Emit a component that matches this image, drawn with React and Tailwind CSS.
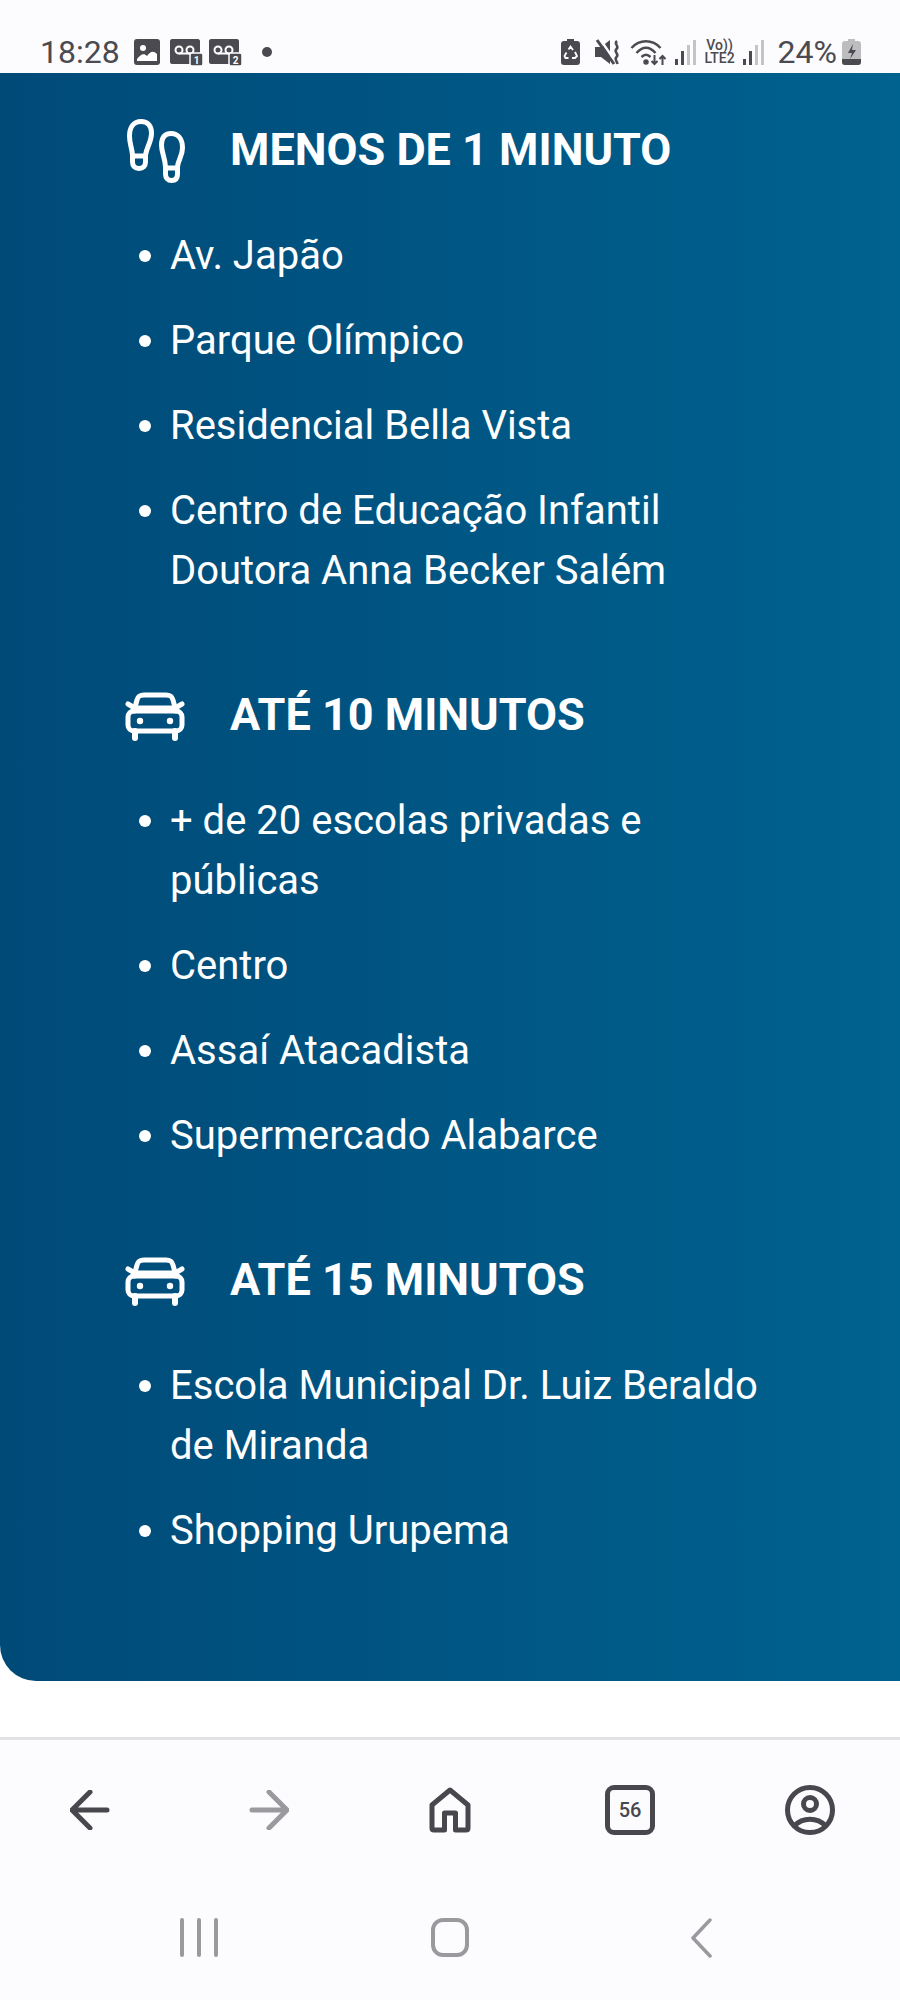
const sections = [
  {
    icon: 'feet',
    title: 'MENOS DE 1 MINUTO',
    items: ['Av. Japão', 'Parque Olímpico', 'Residencial Bella Vista', 'Centro de Educação Infantil Doutora Anna Becker Salém'],
  },
  {
    icon: 'car',
    title: 'ATÉ 10 MINUTOS',
    items: ['+ de 20 escolas privadas e públicas', 'Centro', 'Assaí Atacadista', 'Supermercado Alabarce'],
  },
  {
    icon: 'car',
    title: 'ATÉ 15 MINUTOS',
    items: ['Escola Municipal Dr. Luiz Beraldo de Miranda', 'Shopping Urupema'],
  },
];

function FeetIcon() {
  return (
    <svg width="60" height="66" viewBox="0 0 60 66" fill="none" stroke="white" strokeWidth="5">
      <path d="M15 4.500C22 4.500 25.500 9 25.500 16C25.500 25 21 29 19.500 38V45C19.500 49 17 51.500 13 51.500C9 51.500 6.500 49 6.500 45V38C6 31 3.500 27 3.500 19C3.500 10 8 4.500 15 4.500Z" />
      <path d="M6.500 39H19.500" />
      <path d="M45 16.500C38.500 16.500 35.500 21 35.500 28C35.500 36 39 40 39.500 50V57C39.500 61 42 63.500 45.500 63.500C49.500 63.500 51.500 61 51.500 57V50C52 43 56.500 39 56.500 31C56.500 22 52 16.500 45 16.500Z" />
      <path d="M39.500 51H51.500" />
    </svg>
  );
}

function CarIcon() {
  return (
    <svg className="mt-[4px] -ml-[1px]" width="60" height="52" viewBox="0 0 60 52" fill="none" stroke="white" strokeWidth="5" strokeLinecap="round" strokeLinejoin="round">
      <path d="M3 13L8 16" />
      <path d="M57 13L52 16" />
      <path d="M9 20L12 9C13 5 15 4 19 4H41C45 4 47 5 48 9L51 20" />
      <path d="M9 17H51" />
      <rect x="3" y="20" width="54" height="20" rx="6" />
      <path d="M10 40V47M50 40V47" strokeWidth="6" />
      <circle cx="15" cy="30" r="3.200" fill="white" stroke="none" />
      <circle cx="45" cy="30" r="3.200" fill="white" stroke="none" />
    </svg>
  );
}

function Signal() {
  return (
    <div className="flex items-end gap-[3px] h-[26px]">
      <div className="w-[3px] h-[6px] bg-[#4a4a50]" />
      <div className="w-[3px] h-[14px] bg-[#4a4a50]" />
      <div className="w-[3px] h-[20px] bg-[#c4c4c8]" />
      <div className="w-[3px] h-[25px] bg-[#c4c4c8]" />
    </div>
  );
}

function VoicemailBadge({ n }) {
  return (
    <svg width="33" height="27" viewBox="0 0 33 27">
      <path d="M2 0H28C29 0 30 1 30 2V25H2C1 25 0 24 0 23V2C0 1 1 0 2 0Z" fill="#4a4a50" />
      <circle cx="9" cy="11" r="3.500" fill="none" stroke="white" strokeWidth="2" />
      <circle cx="20" cy="11" r="3.500" fill="none" stroke="white" strokeWidth="2" />
      <path d="M9 14.500H20" stroke="white" strokeWidth="2" />
      <rect x="20" y="14" width="13" height="13" rx="2" fill="#4a4a50" stroke="white" strokeWidth="1.500" />
      <text x="26.500" y="25" fontSize="10" fontWeight="700" fill="white" textAnchor="middle" fontFamily="Roboto, sans-serif">{n}</text>
    </svg>
  );
}

function StatusBar() {
  return (
    <div className="h-[73px] bg-[#fcfbfe] flex justify-between items-end pb-[6px] pl-[40px] pr-[39px] text-[#4a4a50]">
      <div className="flex items-center">
        <span className="text-[32px] leading-[30px] w-[94px]">18:28</span>
        <svg width="26" height="27" viewBox="0 0 26 27">
          <rect width="26" height="26" rx="3" fill="#4a4a50" />
          <circle cx="9" cy="9" r="3" fill="white" />
          <path d="M3 22V20C7 15 10 14 13 17C16 13 19 11 23 15V22Z" fill="white" />
        </svg>
        <div className="ml-[10px]"><VoicemailBadge n="1" /></div>
        <div className="ml-[6px]"><VoicemailBadge n="2" /></div>
        <div className="ml-[20px] w-[10px] h-[10px] rounded-full bg-[#4a4a50]" />
      </div>
      <div className="flex items-center">
        <svg width="19" height="26" viewBox="0 0 19 26">
          <path d="M6 0H13V2H16C18 2 19 3 19 5V23C19 25 18 26 16 26H3C1 26 0 25 0 23V5C0 3 1 2 3 2H6Z" fill="#4a4a50" />
          <path d="M7.500 10.500L9.500 7.500L12 11M14 13L16 17L14 19H11M7.500 19H4.500L3.500 17L5.500 13.500" stroke="white" strokeWidth="1.800" fill="none" />
        </svg>
        <svg className="ml-[15px]" width="26" height="26" viewBox="0 0 26 26">
          <path d="M0 8H6L15 1V25L6 18H0Z" fill="#4a4a50" />
          <path d="M5 0L22 25" stroke="#fcfbfe" strokeWidth="2.500" />
          <path d="M2 1L19 25" stroke="#4a4a50" strokeWidth="3" />
          <path d="M22 2C18 5 25 7 21.500 10C18 13 25 15 21.500 18C19 20 22 22 22.500 25" stroke="#4a4a50" strokeWidth="2.500" fill="none" />
        </svg>
        <svg className="ml-[9px]" width="38" height="27" viewBox="0 0 37 27" fill="none" stroke="#4a4a50" strokeWidth="2.500">
          <path d="M1 9C9 0 22 0 30 9" />
          <path d="M6 14C12 7 19 7 25 14" />
          <path d="M11 18C14 15 17 15 20 18" />
          <circle cx="15.500" cy="23" r="1.500" fill="#4a4a50" />
          <path d="M24 16V25M21 22L24 25L27 22M32 26V17M29 20L32 17L35 20" strokeWidth="2" />
        </svg>
        <div className="ml-[7px]"><Signal /></div>
        <div className="ml-[7px] w-[34px] flex flex-col items-center text-[14px] leading-[13px] font-medium">
          <span>Vo))</span>
          <span>LTE2</span>
        </div>
        <div className="ml-[6px]"><Signal /></div>
        <span className="ml-[14px] text-[32px] leading-[30px]">24%</span>
        <svg className="ml-[5px]" width="19" height="26" viewBox="0 0 19 26">
          <path d="M6 0H13V2H16C18 2 19 3 19 5V23C19 25 18 26 16 26H3C1 26 0 25 0 23V5C0 3 1 2 3 2H6Z" fill="#bdbdc0" />
          <path d="M0 20H19V23C19 25 18 26 16 26H3C1 26 0 25 0 23Z" fill="#4a4a50" />
          <path d="M11 5L6 14H10L8 20L14 11H10Z" fill="#4a4a50" />
        </svg>
      </div>
    </div>
  );
}

function Section({ section }) {
  return (
    <section className="mb-[84px] last:mb-0">
      <div className="flex items-center h-[60px]">
        <div className="w-[105px] pl-[1px] flex justify-start">
          {section.icon === 'feet' ? <FeetIcon /> : <CarIcon />}
        </div>
        <h2 className="text-[45px] leading-[60px] font-bold text-white whitespace-nowrap">{section.title}</h2>
      </div>
      <ul className="mt-[46px] flex flex-col gap-[25px]">
        {section.items.map((item) => (
          <li key={item} className="flex text-[40px] leading-[60px] text-white">
            <span className="w-[12px] h-[12px] rounded-full bg-white mt-[24px] mr-[19px] ml-[14px] shrink-0" />
            <span className="max-w-[620px]">{item}</span>
          </li>
        ))}
      </ul>
    </section>
  );
}

function BrowserNav() {
  return (
    <div className="h-[140px] grid grid-cols-5 items-center text-[#47474d]">
      <div className="flex justify-center">
        <svg width="40" height="40" viewBox="0 0 40 40" fill="none" stroke="currentColor" strokeWidth="5" strokeLinecap="round" strokeLinejoin="round">
          <path d="M37 20H2M20 2L2 20L20 38" />
        </svg>
      </div>
      <div className="flex justify-center -ml-[2px]">
        <svg width="40" height="40" viewBox="0 0 40 40" fill="none" stroke="#9a999e" strokeWidth="5" strokeLinecap="round" strokeLinejoin="round">
          <path d="M3 20H38M20 2L38 20L20 38" />
        </svg>
      </div>
      <div className="flex justify-center">
        <svg width="42" height="46" viewBox="0 0 42 46" fill="none" stroke="currentColor" strokeWidth="5" strokeLinejoin="round">
          <path d="M3 18L21 3L39 18V41Q39 43 37 43H26.500V26H15.500V43H5Q3 43 3 41Z" />
        </svg>
      </div>
      <div className="flex justify-center">
        <div className="w-[50px] h-[50px] rounded-[9px] border-[5px] border-current flex items-center justify-center text-[20px] font-medium">56</div>
      </div>
      <div className="flex justify-center">
        <svg width="50" height="50" viewBox="0 0 50 50" fill="none" stroke="currentColor" strokeWidth="5">
          <circle cx="25" cy="25" r="22.500" />
          <circle cx="25" cy="19" r="6.500" />
          <path d="M9 41C18 32 32 32 41 41" />
        </svg>
      </div>
    </div>
  );
}

function SystemNav() {
  return (
    <div className="h-[120px] pt-[38px] grid grid-cols-3 px-[73px] items-start">
      <div className="flex justify-center gap-[13px]">
        <div className="w-[4px] h-[39px] rounded-full bg-[#9a999e]" />
        <div className="w-[4px] h-[39px] rounded-full bg-[#9a999e]" />
        <div className="w-[4px] h-[39px] rounded-full bg-[#9a999e]" />
      </div>
      <div className="flex justify-center">
        <div className="w-[38px] h-[39px] rounded-[12px] border-[4px] border-[#9a999e]" />
      </div>
      <div className="flex justify-center">
        <svg width="22" height="40" viewBox="0 0 22 40" fill="none" stroke="#9a999e" strokeWidth="3.500" strokeLinecap="round" strokeLinejoin="round">
          <path d="M20 2L3 20L20 38" />
        </svg>
      </div>
    </div>
  );
}

export default function App() {
  return (
    <div className="w-[900px] h-[2000px] bg-white overflow-hidden flex flex-col font-['Roboto',sans-serif]">
      <StatusBar />
      <main className="h-[1608px] rounded-bl-[36px] bg-gradient-to-r from-[#004a78] to-[#00628f] pt-[47px] pb-[96px] pl-[125px]">
        {sections.map((section) => (
          <Section key={section.title} section={section} />
        ))}
      </main>
      <div className="h-[56px] bg-white" />
      <div className="flex-1 bg-[#fcfbfe] border-t-[3px] border-[#e2e2e2]">
        <BrowserNav />
        <SystemNav />
      </div>
    </div>
  );
}
